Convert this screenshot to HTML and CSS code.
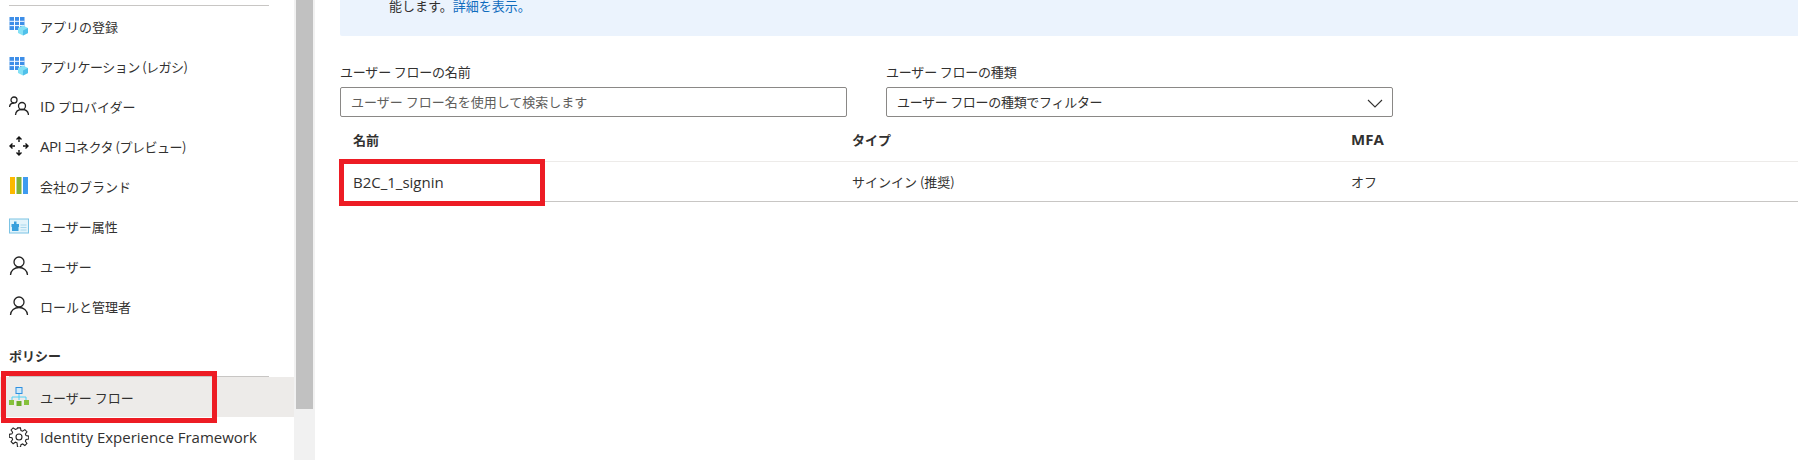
FILE: index.html
```html
<!DOCTYPE html>
<html lang="ja">
<head>
<meta charset="utf-8">
<title>ユーザー フロー</title>
<link rel="stylesheet" href="styles.css">
</head>
<body>
<div class="app">
  <nav class="sidebar">
    <div class="nav-scroll">
      <div class="rule"></div>
      <a class="item"><svg class="icon" viewBox="0 0 20 20"><rect x="0.5" y="1" width="15" height="13" fill="#3d8ee8"/><path d="M5.500 1v13M10.500 1v13M.5 5.300h15M.5 9.600h15" stroke="#fff" stroke-width="1"/><path d="M14 9.500l5 2.500v5l-5 2.500-5-2.500v-5z" fill="#83e0f5"/><path d="M14 14.500l5-2.500v5l-5 2.500z" fill="#50c0ea"/></svg><span>アプリの登録</span></a>
      <a class="item"><svg class="icon" viewBox="0 0 20 20"><rect x="0.5" y="1" width="15" height="13" fill="#3d8ee8"/><path d="M5.500 1v13M10.500 1v13M.5 5.300h15M.5 9.600h15" stroke="#fff" stroke-width="1"/><path d="M14 9.500l5 2.500v5l-5 2.500-5-2.500v-5z" fill="#83e0f5"/><path d="M14 14.500l5-2.500v5l-5 2.500z" fill="#50c0ea"/></svg><span class="narrow">アプリケーション (レガシ)</span></a>
      <a class="item"><svg class="icon" viewBox="0 0 20 20" fill="none" stroke="#222" stroke-width="1.300"><circle cx="5" cy="4" r="3"/><path d="M.5 11c.3-2.500 2-4 4.500-4"/><circle cx="13" cy="10" r="3.500"/><path d="M6.500 19c.2-3.500 3-5.500 6.500-5.500s6.300 2 6.500 5.500"/></svg><span><b class="en">ID</b> プロバイダー</span></a>
      <a class="item"><svg class="icon" viewBox="0 0 20 20" fill="none" stroke="#111" stroke-width="1.400"><path d="M10 1v5M7.500 3.500L10 1l2.500 2.500M10 14v5M7.500 16.500L10 19l2.500-2.500M1 10h5M3.500 7.500L1 10l2.500 2.500M14 10h5M16.500 7.500L19 10l-2.500 2.500"/></svg><span class="narrow"><b class="en">API</b> コネクタ (プレビュー)</span></a>
      <a class="item"><svg class="icon" viewBox="0 0 20 20"><rect x="1" y="1" width="5" height="17" fill="#fcb900"/><rect x="7.500" y="1" width="5" height="17" fill="#7db33a"/><rect x="14" y="1" width="5" height="17" fill="#3e9bf0"/></svg><span>会社のブランド</span></a>
      <a class="item"><svg class="icon" viewBox="0 0 20 20"><rect x=".5" y="3" width="19" height="14" fill="#e3f4fb" stroke="#7cc3e4"/><path d="M5 5.500h2.500V8H10v3H2.500V8H5z" fill="#3aa0dc"/><rect x="3" y="11" width="6.500" height="4" fill="#3aa0dc"/><path d="M11.500 9h6M11.500 11.500h6M11.500 14h6" stroke="#a8d8ee"/></svg><span>ユーザー属性</span></a>
      <a class="item"><svg class="icon" viewBox="0 0 20 20" fill="none" stroke="#222" stroke-width="1.300"><circle cx="10" cy="6" r="5"/><path d="M1.500 19c.2-4.500 4-7.500 8.500-7.500s8.300 3 8.500 7.500"/></svg><span>ユーザー</span></a>
      <a class="item"><svg class="icon" viewBox="0 0 20 20" fill="none" stroke="#222" stroke-width="1.300"><circle cx="10" cy="6" r="5"/><path d="M1.500 19c.2-4.500 4-7.500 8.500-7.500s8.300 3 8.500 7.500"/></svg><span>ロールと管理者</span></a>
      <div class="section">ポリシー</div>
      <div class="rule rule-tight"></div>
      <a class="item active"><svg class="icon" viewBox="0 0 20 20"><rect x="7" y=".5" width="6" height="6" fill="#cde9fb" stroke="#2d8fe0"/><path d="M10 7v3M3 13v-3h14v3M10 10v3" fill="none" stroke="#50d0f5"/><rect x="0" y="13" width="5" height="5" fill="#86c13c"/><rect x="7.500" y="14" width="5" height="5" fill="#6fae2c"/><rect x="15" y="13" width="5" height="5" fill="#86c13c"/></svg><span>ユーザー フロー</span><i class="mark"></i></a>
      <a class="item"><svg class="icon" viewBox="0 0 20 20" fill="none" stroke="#222" stroke-width="1.100"><circle cx="10" cy="10" r="3"/><path d="M8.500 1h3l.5 2.700 1.700.7 2.300-1.600 2.100 2.100-1.600 2.300.7 1.700 2.700.5v3l-2.700.5-.7 1.700 1.600 2.300-2.100 2.100-2.300-1.600-1.700.7-.5 2.700h-3L8 16.300l-1.700-.7L4 17.200 1.900 15.100l1.600-2.300-.7-1.700L.1 10.600v-3l2.700-.5.700-1.700L1.900 3.100 4 1l2.300 1.600 1.700-.7z" transform="translate(.2 -.1) scale(.98)"/></svg><span class="en">Identity Experience Framework</span></a>
    </div>
    <div class="scrollbar"><div class="thumb"></div></div>
  </nav>
  <main class="main">
    <div class="banner"><p>能します。<a class="link">詳細を表示。</a></p></div>
    <div class="filters">
      <label class="field"><span class="field-label">ユーザー フローの名前</span><span class="input placeholder">ユーザー フロー名を使用して検索します</span></label>
      <label class="field"><span class="field-label">ユーザー フローの種類</span><span class="input select">ユーザー フローの種類でフィルター<svg class="chev" viewBox="0 0 16 9"><path d="M1 1l7 7 7-7" fill="none" stroke="#323130" stroke-width="1.100"/></svg></span></label>
    </div>
    <div class="table">
      <div class="row head"><span class="c1">名前</span><span class="c2">タイプ</span><span class="en">MFA</span></div>
      <div class="row body"><span class="c1 named"><span class="en">B2C_1_signin</span><i class="mark"></i></span><span class="c2">サインイン (推奨)</span><span>オフ</span></div>
    </div>
  </main>
</div>
</body>
</html>
```
FILE: styles.css
```css
* { box-sizing: border-box; }
html, body { margin: 0; height: 100%; overflow: hidden; background: #fff; }
body { font-family: "Noto Sans CJK JP", "Noto Sans", sans-serif; font-size: 13px; color: #323130; }
.en { font-family: "Open Sans", "Noto Sans", sans-serif; font-size: 15px; font-weight: inherit; }
.narrow { letter-spacing: -0.5px; }
.app { display: flex; height: 460px; }
.sidebar { display: flex; width: 315px; flex: none; }
.nav-scroll { width: 294px; flex: none; padding-top: 5px; overflow: hidden; }
.rule { height: 1px; background: #c8c6c4; margin: 0 25px 0 9px; }
.rule-tight { margin-top: 10px; }
.item { position: relative; display: flex; align-items: center; height: 40px; padding-left: 9px; white-space: nowrap; }
.item > span { margin-left: 11px; }
.icon { width: 20px; height: 20px; flex: none; }
.active { background: #edebe9; }
.section { font-weight: 700; line-height: 20px; padding-left: 9px; margin-top: 20px; }
.mark { position: absolute; border: 5px solid #ed1c24; pointer-events: none; }
.active .mark { left: 1px; top: -6px; width: 216px; height: 52px; }
.scrollbar { width: 21px; background: #f1f1f1; padding-left: 2px; }
.thumb { width: 17px; height: 409px; background: #c1c1c1; }
.main { flex: 1; padding-left: 25px; }
.banner { height: 36px; background: #ebf3fd; border-radius: 0 0 0 2px; padding-left: 49px; }
.banner p { margin: 0; line-height: 12px; }
.link { color: #0f6cbd; }
.filters { display: flex; gap: 39px; padding-top: 26px; }
.field { display: flex; flex-direction: column; width: 507px; }
.field-label { line-height: 20px; height: 25px; letter-spacing: -0.2px; }
.input { position: relative; height: 30px; border: 1px solid #8a8886; border-radius: 2px; padding: 0 10px; line-height: 28px; }
.placeholder { color: #605e5c; }
.select { letter-spacing: -0.3px; }
.chev { position: absolute; right: 9px; top: 11px; width: 16px; height: 9px; }
.table { width: 1458px; }
.row { display: flex; align-items: center; padding-left: 13px; }
.head { height: 45px; font-weight: 700; border-bottom: 1px solid #edebe9; }
.body { height: 40px; border-bottom: 1px solid #c8c6c4; }
.c1 { width: 499px; position: relative; }
.c2 { width: 499px; }
.named .mark { left: -14px; top: -13px; width: 206px; height: 47px; }
```
